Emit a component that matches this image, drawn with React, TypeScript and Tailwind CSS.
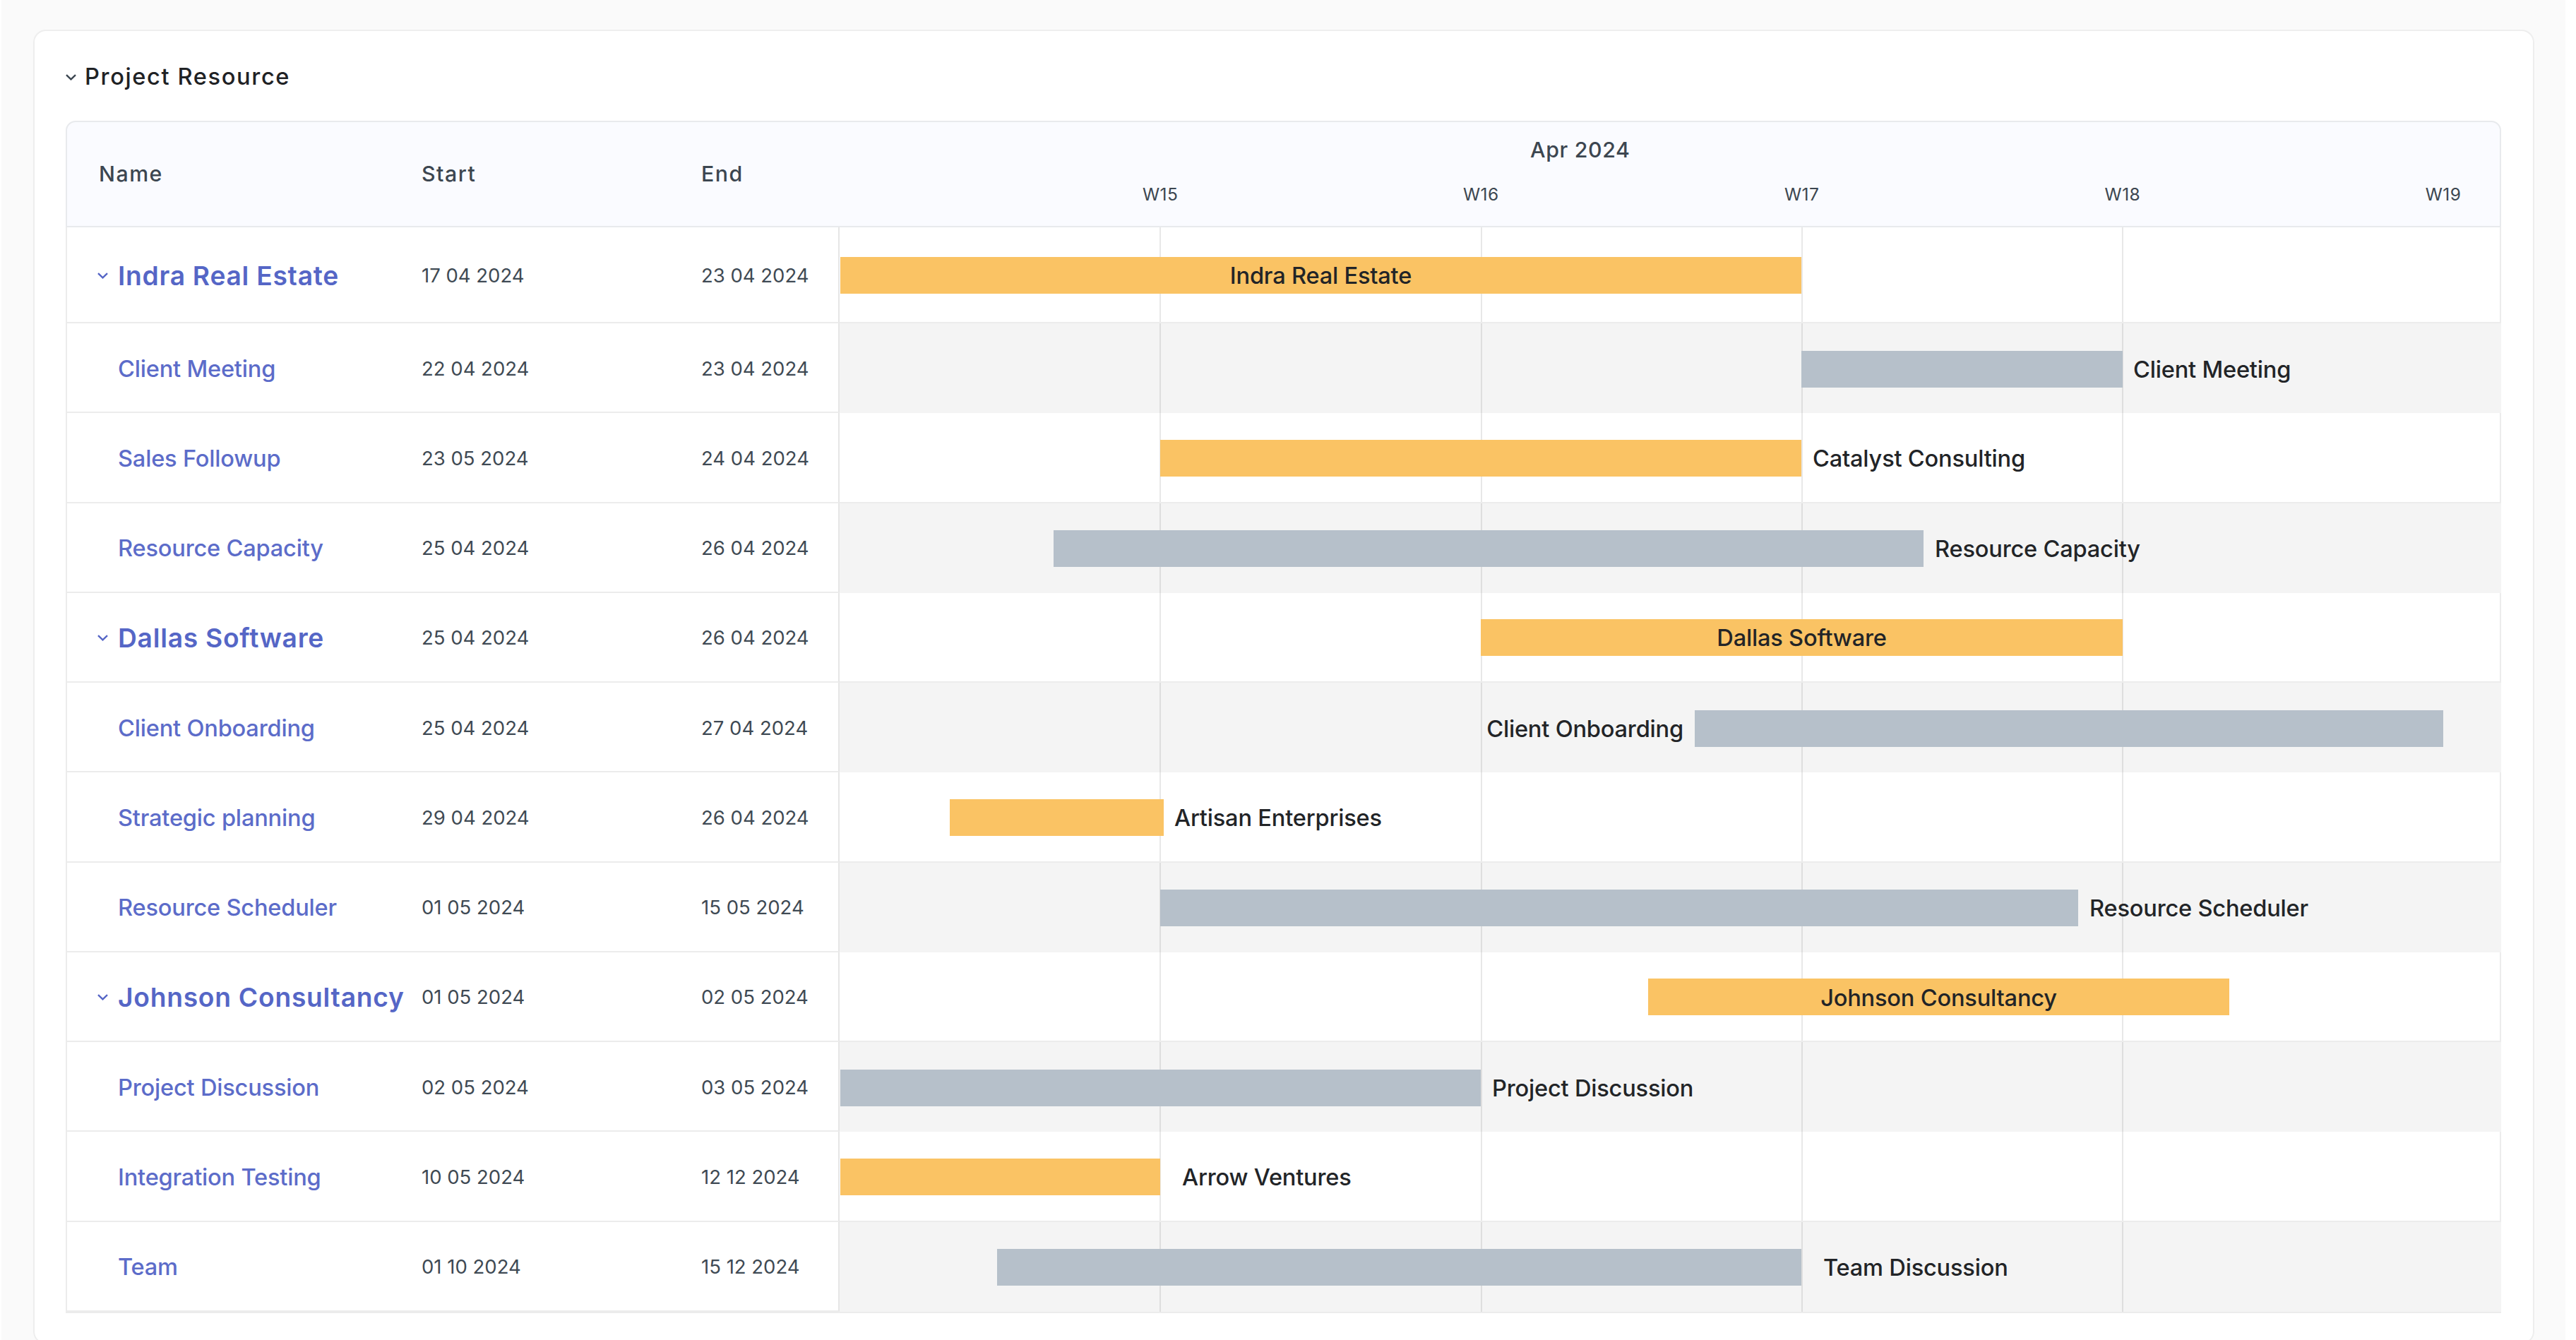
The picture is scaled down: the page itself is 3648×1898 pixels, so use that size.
import React from "react";

type Row = {
  name: string;
  start: string;
  end: string;
  parent?: boolean;
  from: number;
  to: number;
  amber?: boolean;
  label: string;
  pos: "in" | "right" | "left";
  gap?: number;
};

const ORIGIN = 1189;

const rows: Row[] = [
  { name: "Indra Real Estate", start: "17 04 2024", end: "23 04 2024", parent: true, from: 1190, to: 2551, amber: true, label: "Indra Real Estate", pos: "in" },
  { name: "Client Meeting", start: "22 04 2024", end: "23 04 2024", from: 2551, to: 3006, label: "Client Meeting", pos: "right", gap: 15 },
  { name: "Sales Followup", start: "23 05 2024", end: "24 04 2024", from: 1643, to: 2551, amber: true, label: "Catalyst Consulting", pos: "right", gap: 16 },
  { name: "Resource Capacity", start: "25 04 2024", end: "26 04 2024", from: 1492, to: 2724, label: "Resource Capacity", pos: "right", gap: 16 },
  { name: "Dallas Software", start: "25 04 2024", end: "26 04 2024", parent: true, from: 2097, to: 3006, amber: true, label: "Dallas Software", pos: "in" },
  { name: "Client Onboarding", start: "25 04 2024", end: "27 04 2024", from: 2400, to: 3460, label: "Client Onboarding", pos: "left", gap: 16 },
  { name: "Strategic planning", start: "29 04 2024", end: "26 04 2024", from: 1345, to: 1648, amber: true, label: "Artisan Enterprises", pos: "right", gap: 15 },
  { name: "Resource Scheduler", start: "01 05 2024", end: "15 05 2024", from: 1643, to: 2943, label: "Resource Scheduler", pos: "right", gap: 16 },
  { name: "Johnson Consultancy", start: "01 05 2024", end: "02 05 2024", parent: true, from: 2334, to: 3157, amber: true, label: "Johnson Consultancy", pos: "in" },
  { name: "Project Discussion", start: "02 05 2024", end: "03 05 2024", from: 1190, to: 2097, label: "Project Discussion", pos: "right", gap: 16 },
  { name: "Integration Testing", start: "10 05 2024", end: "12 12 2024", from: 1190, to: 1643, amber: true, label: "Arrow Ventures", pos: "right", gap: 31 },
  { name: "Team", start: "01 10 2024", end: "15 12 2024", from: 1412, to: 2551, label: "Team Discussion", pos: "right", gap: 31 },
];

const weeks = ["W15", "W16", "W17", "W18", "W19"];

function Chevron({ className }: { className: string }) {
  return (
    <svg viewBox="0 0 15 9" fill="none" className={className}>
      <polyline points="1,1.2 7.5,7.4 14,1.2" stroke="currentColor" strokeWidth="2.4" />
    </svg>
  );
}

function GridLines() {
  return (
    <div className="absolute inset-0 flex pl-[1px]">
      {[0, 1, 2, 3].map((i) => (
        <div key={i} className="h-full w-[454.25px] shrink-0 border-r-2 border-black/[0.09]" />
      ))}
    </div>
  );
}

function Bar({ row }: { row: Row }) {
  const width = row.to - row.from;
  const left = row.from - ORIGIN;
  const color = row.amber ? "bg-[#fac364]" : "bg-[#b6c0ca]";
  const labelClass = "pt-[1px] text-[32.6px] font-medium text-[#222427] whitespace-nowrap tracking-[-0.006em]";
  if (row.pos === "in") {
    return (
      <div className="relative flex h-full items-center pt-[2px]">
        <div className={`flex h-[52px] shrink-0 items-center justify-center ${color}`} style={{ marginLeft: left, width }}>
          <span className={labelClass}>{row.label}</span>
        </div>
      </div>
    );
  }
  if (row.pos === "left") {
    return (
      <div className="relative flex h-full items-center pt-[2px]">
        <div className="flex shrink-0 justify-end" style={{ width: left - (row.gap ?? 0) }}>
          <span className={labelClass}>{row.label}</span>
        </div>
        <div className={`h-[52px] shrink-0 ${color}`} style={{ marginLeft: row.gap, width }} />
      </div>
    );
  }
  return (
    <div className="relative flex h-full items-center pt-[2px]">
      <div className={`h-[52px] shrink-0 ${color}`} style={{ marginLeft: left, width }} />
      <span className={labelClass} style={{ marginLeft: row.gap }}>{row.label}</span>
    </div>
  );
}

export default function App() {
  return (
    <div className="h-[1898px] w-[3648px] overflow-hidden bg-white pl-[2px] font-['Inter',sans-serif]">
      <div className="h-full w-[3631px] bg-[#fafafa] pl-[45px] pt-[42px]">
        <div className="h-[1862px] w-[3542px] rounded-[18px] border-2 border-[#eeeeee] bg-white pl-[44px]">
          <div className="flex h-[127px] items-start pt-[41px]">
            <Chevron className="mt-[20px] h-[9px] w-[15px] text-[#3c4650]" />
            <span className="ml-[12px] text-[32.6px] leading-[46px] font-medium tracking-[0.05em] text-[#1f2225]">Project Resource</span>
          </div>

          <div className="w-[3449px]">
            <div className="flex h-[151px] rounded-t-[14px] border-2 border-[#e8eaed] bg-[#fafbff] text-[#3c4650]">
              <div className="flex w-[1094px] shrink-0 items-center text-[30.3px] font-medium tracking-[0.05em]">
                <div className="w-[502px] pl-[45px]">Name</div>
                <div className="w-[396px]">Start</div>
                <div>End</div>
              </div>
              <div className="flex-1 pt-[16px]">
                <div className="pl-[978px] text-[30.3px] leading-[46px] font-medium tracking-[0.022em]">Apr 2024</div>
                <div className="mt-[24px] flex pl-[227px]">
                  {weeks.map((w) => (
                    <div key={w} className="w-[454.25px] shrink-0 text-center text-[24.5px] leading-[32px] tracking-[0.02em]">{w}</div>
                  ))}
                </div>
              </div>
            </div>

            {rows.map((r, i) => {
              const gray = i % 2 === 1;
              return (
                <div key={r.name} className={`flex ${i === 0 ? "h-[136px]" : "h-[127.27px]"}`}>
                  <div className="flex w-[1096px] shrink-0 items-center border-r-2 border-b-2 border-l-2 border-[#ececec] border-r-[#e6e6e6] pt-[3px]">
                    <div className="flex w-[502px] shrink-0 items-center">
                      {r.parent ? (
                        <Chevron className="ml-[43px] h-[9px] w-[15px] shrink-0 text-[#5666c6]" />
                      ) : (
                        <div className="w-[58px] shrink-0" />
                      )}
                      <span
                        className={
                          r.parent
                            ? "ml-[14px] whitespace-nowrap text-[37.2px] font-semibold tracking-[0.02em] text-[#5566c6]"
                            : "ml-[14px] whitespace-nowrap text-[32.6px] font-medium tracking-[-0.006em] text-[#5c6cc9]"
                        }
                      >
                        {r.name}
                      </span>
                    </div>
                    <div className="w-[396px] shrink-0 text-[27.5px] text-[#3f4a54]">{r.start}</div>
                    <div className="text-[27.5px] text-[#3f4a54]">{r.end}</div>
                  </div>
                  <div className={`relative flex-1 ${gray ? "bg-[#f4f4f4]" : "border-r-2 border-b-2 border-[#ececec] bg-white"}`}>
                    <GridLines />
                    <Bar row={r} />
                  </div>
                </div>
              );
            })}
            <div className="h-[2px] bg-[#ececec]" />
          </div>
        </div>
      </div>
    </div>
  );
}
